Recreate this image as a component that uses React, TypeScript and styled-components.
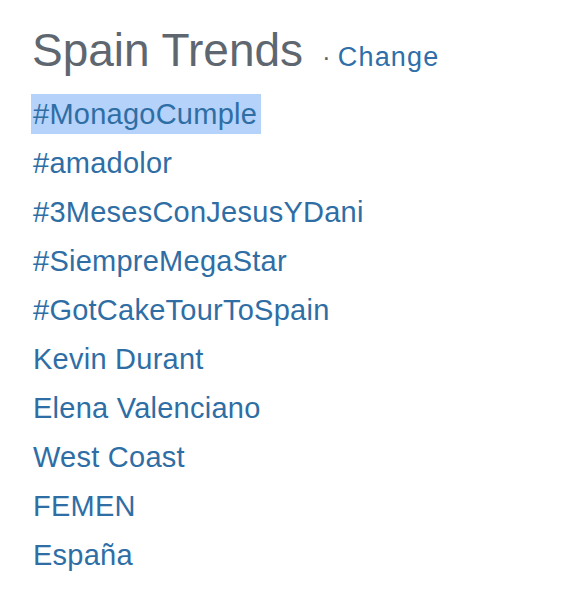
import React from "react";
import styled, { createGlobalStyle } from "styled-components";

const GlobalStyle = createGlobalStyle`
  html, body {
    margin: 0;
    padding: 0;
    background: #fff;
  }
`;

const TrendsBox = styled.div`
  width: 570px;
  height: 594px;
  box-sizing: border-box;
  padding: 22px 0 0 31px;
  font-family: "Liberation Sans", Arial, sans-serif;
  background: #fff;
`;

const Header = styled.div`
  display: flex;
  align-items: baseline;
  margin-bottom: 11px;
  padding-left: 1px;
`;

const Title = styled.h3`
  margin: 0;
  font-size: 46px;
  font-weight: normal;
  color: #5e6670;
  line-height: 56px;
`;

const Dot = styled.span`
  font-size: 26px;
  color: #666;
  margin: 0 7px 0 19px;
`;

const ChangeLink = styled.a`
  font-size: 27px;
  letter-spacing: 1.2px;
  color: #2f6ea8;
  text-decoration: none;
`;

const TrendList = styled.ul`
  list-style: none;
  margin: 0;
  padding: 0;
  display: flex;
  flex-direction: column;
  align-items: flex-start;
`;

const TrendItem = styled.li`
  font-size: 29px;
  height: 49px;
  display: flex;
  align-items: center;
`;

const TrendLink = styled.a<{ $selected?: boolean }>`
  display: inline-block;
  line-height: 40px;
  letter-spacing: 0.25px;
  color: #2f6ea5;
  text-decoration: none;
  padding: 0 4px 0 2px;
  background: ${(props) => (props.$selected ? "#b4d2fa" : "transparent")};
`;

const trends = [
  "#MonagoCumple",
  "#amadolor",
  "#3MesesConJesusYDani",
  "#SiempreMegaStar",
  "#GotCakeTourToSpain",
  "Kevin Durant",
  "Elena Valenciano",
  "West Coast",
  "FEMEN",
  "España",
];

const App: React.FC = () => {
  return (
    <>
      <GlobalStyle />
      <TrendsBox>
        <Header>
          <Title>Spain Trends</Title>
          <Dot>·</Dot>
          <ChangeLink href="#">Change</ChangeLink>
        </Header>
        <TrendList>
          {trends.map((trend, index) => (
            <TrendItem key={index}>
              <TrendLink href="#" $selected={index === 0}>
                {trend}
              </TrendLink>
            </TrendItem>
          ))}
        </TrendList>
      </TrendsBox>
    </>
  );
};

export default App;
